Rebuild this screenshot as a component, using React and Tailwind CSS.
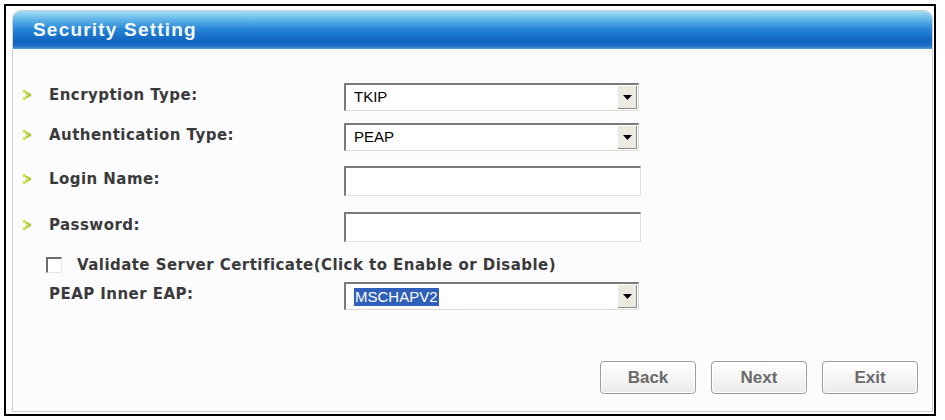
import React from "react";

const font = { fontFamily: '"Liberation Sans", Arial, sans-serif' };
const labelFont = { fontFamily: '"DejaVu Sans", Verdana, sans-serif' };

function Bullet() {
  return (
    <svg width="9" height="10" viewBox="0 0 9 10" className="shrink-0">
      <rect x="0" y="0" width="3" height="3" fill="#d0e44c" />
      <rect x="2.5" y="2" width="3" height="2.5" fill="#b4d030" />
      <rect x="5" y="3.5" width="3" height="3" fill="#a6c824" />
      <rect x="2.5" y="5.5" width="3" height="2.5" fill="#b4d030" />
      <rect x="0" y="7" width="3" height="3" fill="#d0e44c" />
    </svg>
  );
}

function Select({ value, selected }) {
  return (
    <div className="flex h-[28px] w-[295px] items-stretch border-t-2 border-l-2 border-t-[#7a7a7a] border-l-[#7a7a7a] border-b border-r border-b-[#dedbd2] border-r-[#dedbd2] bg-white">
      <div className="flex flex-1 items-center pl-[8px]">
        {selected ? (
          <span className="bg-[#2f5fb8] px-[1px] text-[15px] leading-[18px] text-white">{value}</span>
        ) : (
          <span className="text-[15px] text-black">{value}</span>
        )}
      </div>
      <div className="m-[1px] flex w-[19px] items-center justify-center border-r border-b border-r-[#8a8a8a] border-b-[#8a8a8a] bg-[#ebe9e0]">
        <svg width="9" height="5" viewBox="0 0 9 5">
          <polygon points="0,0 9,0 4.5,5" fill="#000" />
        </svg>
      </div>
    </div>
  );
}

function TextInput() {
  return (
    <div className="h-[30px] w-[297px] border-t-2 border-l-2 border-t-[#7a7a7a] border-l-[#7a7a7a] border-b border-r border-b-[#e4e1da] border-r-[#e4e1da] bg-white" />
  );
}

function Row({ label, children, h, bullet = true }) {
  return (
    <div className="flex items-center" style={{ height: h }}>
      <div className="flex w-[331px] items-center pb-[4px]">
        <div className="flex w-[36px] justify-start pl-[10px]">{bullet ? <Bullet /> : null}</div>
        <span className="text-[15px] font-bold tracking-[0.45px] text-[#3a3a3a]" style={labelFont}>{label}</span>
      </div>
      {children}
    </div>
  );
}

function Btn({ children }) {
  return (
    <div className="flex h-[33px] w-[96px] items-center justify-center rounded-[4px] border border-[#9c9c9c] bg-gradient-to-b from-[#ffffff] to-[#ebebeb] shadow-[inset_0_0_0_1px_#ffffff]">
      <span className="text-[17px] font-bold text-[#6a6a6a]">{children}</span>
    </div>
  );
}

export default function App() {
  return (
    <div className="h-[420px] w-[945px] bg-white pl-[4px] pt-[4px]" style={font}>
      <div className="h-[412px] w-[932px] border-2 border-black bg-white pl-[6px] pr-[1px] pt-[4px] pb-[2px]">
        <div className="flex h-full flex-col rounded-t-[9px] border border-[#cfcfd4] bg-[#fcfbfd]">
          <div className="flex h-[38px] items-center rounded-t-[8px] bg-[linear-gradient(to_bottom,#a4def4_0%,#62b6e8_22%,#2585d6_48%,#0f63bf_80%,#1c6fc4_92%,#5a9ad6_100%)] pl-[20px]">
            <span className="text-[19px] font-bold tracking-[1.2px] text-[#f4f8fc]">Security Setting</span>
          </div>
          <div className="flex flex-1 flex-col pt-[34px]">
            <Row label="Encryption Type:" h={28}>
              <Select value="TKIP" />
            </Row>
            <div className="h-[12px]" />
            <Row label="Authentication Type:" h={28}>
              <Select value="PEAP" />
            </Row>
            <div className="h-[15px]" />
            <Row label="Login Name:" h={30}>
              <TextInput />
            </Row>
            <div className="h-[16px]" />
            <Row label="Password:" h={30}>
              <TextInput />
            </Row>
            <div className="h-[13px]" />
            <div className="flex h-[20px] items-center pl-[33px]">
              <div className="h-[16px] w-[16px] border-t-2 border-l-2 border-t-[#6c6c6c] border-l-[#6c6c6c] border-b border-r border-b-[#e6e6e6] border-r-[#e6e6e6] bg-white" />
              <span className="ml-[15px] text-[15px] font-bold tracking-[0.45px] text-[#3a3a3a]" style={labelFont}>
                Validate Server Certificate(Click to Enable or Disable)
              </span>
            </div>
            <div className="h-[7px]" />
            <Row label="PEAP Inner EAP:" h={28} bullet={false}>
              <Select value="MSCHAPV2" selected />
            </Row>
            <div className="flex justify-end gap-[15px] pr-[14px] pt-[51px]">
              <Btn>Back</Btn>
              <Btn>Next</Btn>
              <Btn>Exit</Btn>
            </div>
          </div>
        </div>
      </div>
    </div>
  );
}
